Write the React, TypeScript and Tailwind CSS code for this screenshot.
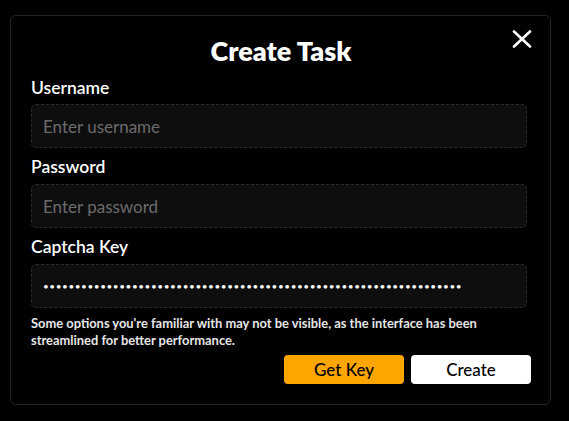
import React from "react";

const FONT = { fontFamily: "Lato, 'Open Sans', sans-serif" };

function Field({ label, placeholder, value, first }: { label: string; placeholder?: string; value?: string; first?: boolean }) {
  return (
    <div className="flex flex-col">
      <label className={`${first ? "mt-[9px]" : "mt-[7px]"} text-[17.5px] leading-6 font-semibold text-white`}>{label}</label>
      <input
        readOnly
        placeholder={placeholder}
        value={value ?? ""}
        className={`${first ? "mt-1" : "mt-[5px]"} h-[44px] w-[496px] rounded-[5px] border border-dashed border-[#2a2a2a] bg-[#0e0e0e] px-[11px] text-white placeholder:text-[#6b6b6b] outline-none ${value ? "text-[10px] tracking-[0.55px]" : "text-[17px]"}`}
        style={FONT}
      />
    </div>
  );
}

export default function App() {
  return (
    <div className="w-[569px] h-[421px] bg-black pt-[15px] pl-[10px]" style={FONT}>
      <div className="relative w-[541px] rounded-[6px] border border-[#262626] bg-black pl-[20px] pr-[19px] pt-[19px] pb-[20px]">
        <button className="absolute top-[14px] right-[18px] w-[20px] h-[18px]">
          <svg width="20" height="18" viewBox="0 0 20 18" fill="none" stroke="white" strokeWidth="2.6" strokeLinecap="round">
            <line x1="2" y1="1.5" x2="18" y2="16.5" />
            <line x1="18" y1="1.5" x2="2" y2="16.5" />
          </svg>
        </button>
        <h1 className="h-8 leading-8 text-center text-[27px] font-extrabold text-white">Create Task</h1>
        <Field first label="Username" placeholder="Enter username" />
        <Field label="Password" placeholder="Enter password" />
        <Field label="Captcha Key" value={"•".repeat(66)} />
        <p className="mt-[7px] text-[12.9px] leading-[17px] font-bold text-[#e6e6e6]">
          Some options you're familiar with may not be visible, as the interface has been
          <br />
          streamlined for better performance.
        </p>
        <div className="mt-[6px] flex justify-end gap-[7px]">
          <button className="h-[29px] w-[120px] rounded-[4px] bg-[#ffa500] text-[17px] font-medium text-black">Get Key</button>
          <button className="h-[29px] w-[120px] rounded-[4px] bg-white text-[17px] font-medium text-black">Create</button>
        </div>
      </div>
    </div>
  );
}
